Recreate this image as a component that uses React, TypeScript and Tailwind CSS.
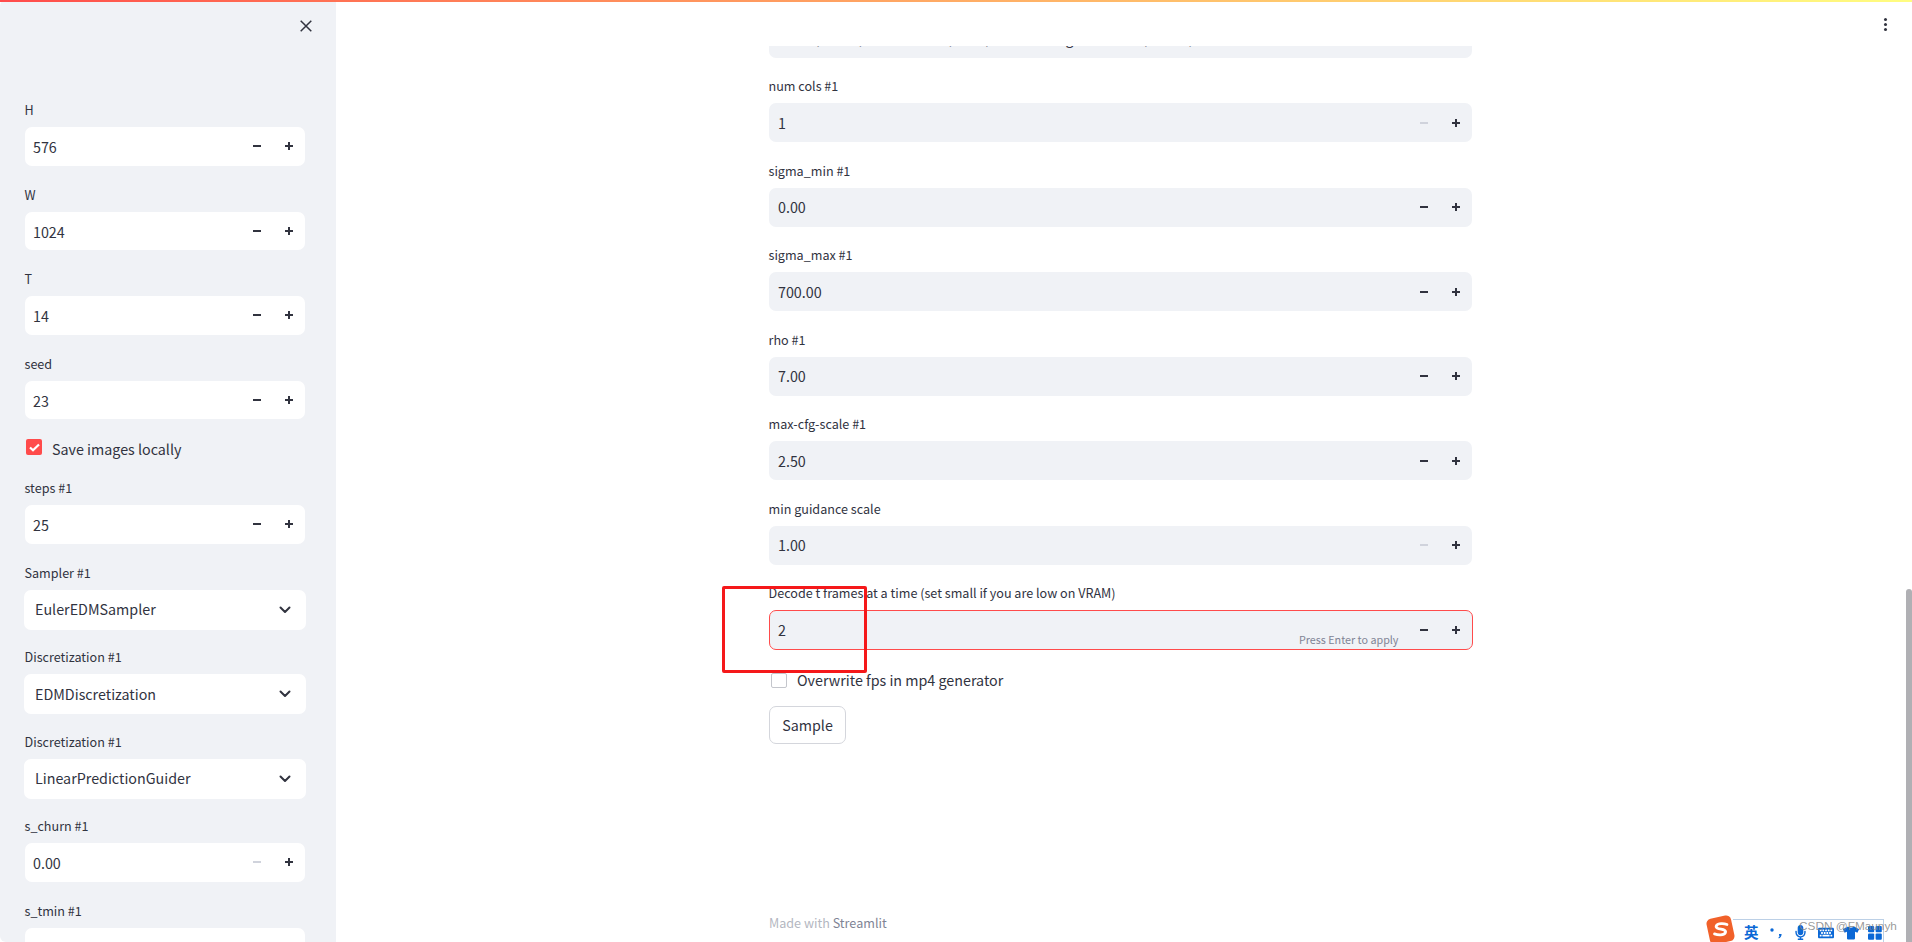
import React from "react";
import { FaMicrophone, FaKeyboard, FaTshirt } from "react-icons/fa";

const font = "[font-family:'Noto_Sans_CJK_SC','Noto_Sans',sans-serif]";

function Minus({ disabled }: { disabled?: boolean }) {
  return (
    <svg width="10" height="10" viewBox="0 0 10 10" className={disabled ? "text-[#d0d3dc]" : "text-[#31333f]"}>
      <rect x="1" y="4" width="8" height="2" fill="currentColor" />
    </svg>
  );
}
function Plus() {
  return (
    <svg width="10" height="10" viewBox="0 0 10 10" className="text-[#31333f]">
      <rect x="1" y="4" width="8" height="2" fill="currentColor" />
      <rect x="4" y="1" width="2" height="8" fill="currentColor" />
    </svg>
  );
}
function Stepper({ minusOff }: { minusOff?: boolean }) {
  return (
    <div className="flex items-center gap-[22px] pr-[11px]">
      <Minus disabled={minusOff} />
      <Plus />
    </div>
  );
}
function Label({ children }: { children: React.ReactNode }) {
  return <div className="-ml-[0.5px] h-[29px] text-[12.6px] leading-[24px] text-[#31333f] whitespace-nowrap">{children}</div>;
}
function SideNum({ label, value, minusOff }: { label: string; value: string; minusOff?: boolean }) {
  return (
    <div className="h-[84.5px]">
      <Label>{label}</Label>
      <div className="h-[38.5px] w-[280px] rounded-[7px] bg-white flex items-center justify-between pl-[8px]">
        <span className="pt-[2px] text-[14.3px] leading-none text-[#31333f]">{value}</span>
        <Stepper minusOff={minusOff} />
      </div>
    </div>
  );
}
function SideSelect({ label, value }: { label: string; value: string }) {
  return (
    <div className="h-[84.5px]">
      <Label>{label}</Label>
      <div className="-ml-[1px] h-[40px] w-[282px] rounded-[7px] bg-white flex items-center justify-between pl-[11px] pr-[15px]">
        <span className="text-[14.3px] leading-none text-[#31333f]">{value}</span>
        <svg width="12" height="8" viewBox="0 0 12 8" fill="none" stroke="#31333f" strokeWidth="2" strokeLinecap="round" strokeLinejoin="round">
          <path d="M1.5 1.5 6 6l4.500-4.500" />
        </svg>
      </div>
    </div>
  );
}
function MainNum({ label, value, minusOff }: { label: string; value: string; minusOff?: boolean }) {
  return (
    <div className="h-[84.5px]">
      <Label>{label}</Label>
      <div className="h-[39px] w-[703px] rounded-[7px] bg-[#f0f2f6] flex items-center justify-between pl-[9px]">
        <span className="pt-[1px] text-[14.3px] leading-none text-[#31333f]">{value}</span>
        <Stepper minusOff={minusOff} />
      </div>
    </div>
  );
}

export default function App() {
  return (
    <div className={`relative flex h-[942px] w-[1912px] overflow-hidden bg-white ${font}`}>
      <div className="absolute left-0 top-0 z-20 h-[2px] w-full bg-gradient-to-r from-[#ff4b4b] to-[#fffd80]" />

      {/* Sidebar */}
      <aside className="relative h-full w-[336px] shrink-0 overflow-hidden rounded-tl-[6px] rounded-bl-[6px] bg-[#f0f2f6] pl-[25px] pt-[98px]">
        <svg className="absolute left-[300px] top-[20px]" width="12" height="12" viewBox="0 0 12 12" fill="none" stroke="#31333f" strokeWidth="1.5">
          <path d="M.7.7l10.6 10.6M11.300.7.7 11.300" />
        </svg>
        <SideNum label="H" value="576" />
        <SideNum label="W" value="1024" />
        <SideNum label="T" value="14" />
        <SideNum label="seed" value="23" />
        <div className="flex h-[40px] items-start pt-[3px]">
          <div className="ml-[1px] flex h-[16px] w-[16px] items-center justify-center rounded-[2px] bg-[#ff4b4b]">
            <svg width="11" height="9" viewBox="0 0 11 9" fill="none" stroke="white" strokeWidth="2.200">
              <path d="M1 4.500 4 7.300 10 1.500" />
            </svg>
          </div>
          <span className="ml-[10px] pt-[3px] text-[14.3px] leading-none text-[#31333f]">Save images locally</span>
        </div>
        <SideNum label="steps #1" value="25" />
        <SideSelect label="Sampler #1" value="EulerEDMSampler" />
        <SideSelect label="Discretization #1" value="EDMDiscretization" />
        <SideSelect label="Discretization #1" value="LinearPredictionGuider" />
        <SideNum label="s_churn #1" value="0.00" minusOff />
        <SideNum label="s_tmin #1" value="0.00" />
      </aside>

      {/* Main */}
      <main className="relative flex h-full flex-1 flex-col overflow-hidden rounded-tr-[8px] pl-[433px]">
        <div className="h-[46px] shrink-0" />
        <div className="flex h-[12px] w-[703px] shrink-0 items-end overflow-hidden rounded-b-[7px] bg-[#f0f2f6] pl-[9px]">
          <span className="mb-[13px] whitespace-nowrap text-[14.3px] leading-[14px] text-[#31333f]">mode, more, random cats, nine, lots of a large view of it, white, more</span>
        </div>
        <div className="h-[16px] shrink-0" />
        <MainNum label="num cols #1" value="1" minusOff />
        <MainNum label="sigma_min #1" value="0.00" />
        <MainNum label="sigma_max #1" value="700.00" />
        <MainNum label="rho #1" value="7.00" />
        <MainNum label="max-cfg-scale #1" value="2.50" />
        <MainNum label="min guidance scale" value="1.00" minusOff />

        <Label>Decode t frames at a time (set small if you are low on VRAM)</Label>
        <div className="relative flex h-[40px] w-[704px] shrink-0 items-center justify-between rounded-[7px] border border-[#ff4b4b] bg-[#f0f2f6] pl-[8px]">
          <span className="pt-[1px] text-[14.3px] leading-none text-[#31333f]">2</span>
          <Stepper />
          <span className="absolute left-[529px] top-[21px] whitespace-nowrap text-[10.75px] leading-[16px] text-[#808495]">Press Enter to apply</span>
        </div>

        <div className="mt-[23px] flex h-[14px] items-center">
          <div className="ml-[2px] h-[15px] w-[16px] rounded-[2px] border border-[#c4c6cc] bg-white" />
          <span className="ml-[10px] text-[14.3px] leading-none text-[#31333f]">Overwrite fps in mp4 generator</span>
        </div>
        <button className="mt-[19px] h-[38px] w-[77px] rounded-[7px] border border-[#d4d6dc] bg-white text-[14.3px] leading-none text-[#31333f]">Sample</button>

        <div className="mb-[10px] mt-auto text-[12.6px] leading-[18px] text-[#b4b7c1]">
          Made with <span className="text-[#808495]">Streamlit</span>
        </div>

        {/* Kebab menu */}
        <div className="absolute left-[1548px] top-[18px] flex flex-col gap-[2px]">
          <span className="h-[3px] w-[3px] rounded-full bg-[#31333f]" />
          <span className="h-[3px] w-[3px] rounded-full bg-[#31333f]" />
          <span className="h-[3px] w-[3px] rounded-full bg-[#31333f]" />
        </div>
        {/* Scrollbar */}
        <div className="absolute right-0 top-[589px] h-[353px] w-[6px] rounded-t-[3px] bg-[#b0b0b4]" />
      </main>

      {/* IME toolbar */}
      <div className="absolute left-[1733px] top-[919px] z-10 flex h-[23px] w-[151px] items-center border-r border-t border-[#bcd0e6] bg-white/60 pt-[3px] text-[#0b68d6]">
        <span className="ml-[11px] text-[14.5px] font-bold leading-none">英</span>
        <svg className="ml-[10px]" width="14" height="14" viewBox="0 0 14 14" fill="currentColor">
          <circle cx="3" cy="4" r="1.7" />
          <path d="M10 8h2.600c0 2.400-1 3.600-2.800 4.400l-.4-.8c.8-.5 1.200-1 1.300-1.800H10z" />
        </svg>
        <FaMicrophone className="ml-[10px]" size={15} />
        <FaKeyboard className="ml-[10px]" size={16} />
        <FaTshirt className="ml-[9px]" size={16} />
        <svg className="ml-[9px]" width="14" height="14" viewBox="0 0 14 14" fill="currentColor">
          <rect x="0" y="0" width="6.200" height="6.200" rx="1" />
          <rect x="7.600" y="0" width="6.200" height="6.200" rx="1" />
          <rect x="0" y="7.600" width="6.200" height="6.200" rx="1" />
          <rect x="7.600" y="7.600" width="6.200" height="6.200" rx="1" />
        </svg>
      </div>
      <svg className="absolute left-[1706px] top-[914px] z-10" width="30" height="28" viewBox="0 0 30 28">
        <rect x="2" y="3" width="25" height="26" rx="5" fill="#f1612a" transform="rotate(-12 14 16)" />
        <path d="M21 10.500c-3-1.200-9-1.400-10.500 1-1.300 2.300 1.700 3.300 4.500 3.700 3 .5 5.500 1.500 4.200 3.800-1.300 2.300-7 2.200-10.700.9" fill="none" stroke="white" strokeWidth="2.800" strokeLinecap="round" />
      </svg>
      <div className="absolute left-[1799px] top-[917px] z-10 whitespace-nowrap font-['Liberation_Sans',sans-serif] text-[11.800px] leading-[18px] text-[#7f7f7f]/80">CSDN @FMaunyh</div>

      {/* Red annotation rectangle */}
      <div className="absolute left-[722px] top-[586px] z-10 h-[87px] w-[145px] rounded-[2px] border-[3px] border-[#f5181a]" />
    </div>
  );
}
